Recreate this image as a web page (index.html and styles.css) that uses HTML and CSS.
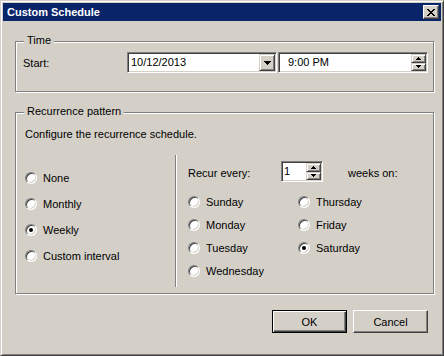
FILE: index.html
```html
<!DOCTYPE html>
<html lang="en">
<head>
    <meta charset="UTF-8">
    <title>Custom Schedule</title>
    <link rel="stylesheet" href="styles.css">
</head>
<body>
    <div class="window">
        <div class="titlebar">
            <span class="title">Custom Schedule</span>
            <span class="close">
                <svg width="8" height="7" viewBox="0 0 8 7"><path d="M0 0h2v1H0z M6 0h2v1H6z M1 1h2v1H1z M5 1h2v1H5z M2 2h4v1H2z M3 3h2v1H3z M2 4h4v1H2z M1 5h2v1H1z M5 5h2v1H5z M0 6h2v1H0z M6 6h2v1H6z" fill="#000"/></svg>
            </span>
        </div>

        <div class="client">
            <!-- time group -->
            <div class="group group-time">
                <div class="group-title">Time</div>
                <div class="time-row">
                    <span class="start-label">Start:</span>
                    <div class="field combo">
                        <span class="value">10/12/2013</span>
                        <span class="bevel drop-btn">
                            <svg width="7" height="4" viewBox="0 0 7 4"><path d="M0 0h7v1H0z M1 1h5v1H1z M2 2h3v1H2z M3 3h1v1H3z" fill="#000"/></svg>
                        </span>
                    </div>
                    <div class="field spin spin-time">
                        <span class="value">9:00 PM</span>
                        <span class="spin-btns">
                            <span class="bevel spin-btn"><svg width="5" height="3" viewBox="0 0 5 3"><path d="M2 0h1v1H2z M1 1h3v1H1z M0 2h5v1H0z" fill="#000"/></svg></span>
                            <span class="bevel spin-btn"><svg width="5" height="3" viewBox="0 0 5 3"><path d="M0 0h5v1H0z M1 1h3v1H1z M2 2h1v1H2z" fill="#000"/></svg></span>
                        </span>
                    </div>
                </div>
            </div>

            <!-- recurrence group -->
            <div class="group group-recur">
                <div class="group-title">Recurrence pattern</div>
                <div class="hint">Configure the recurrence schedule.</div>
                <div class="columns">
                    <div class="col-left">
                        <div class="option"><span class="radio"></span>None</div>
                        <div class="option"><span class="radio"></span>Monthly</div>
                        <div class="option"><span class="radio checked"></span>Weekly</div>
                        <div class="option"><span class="radio"></span>Custom interval</div>
                    </div>
                    <div class="col-right">
                        <div class="every-row">
                            <span class="every-label">Recur every:</span>
                            <div class="field spin spin-weeks">
                                <span class="value">1</span>
                                <span class="spin-btns">
                                    <span class="bevel spin-btn"><svg width="5" height="3" viewBox="0 0 5 3"><path d="M2 0h1v1H2z M1 1h3v1H1z M0 2h5v1H0z" fill="#000"/></svg></span>
                                    <span class="bevel spin-btn"><svg width="5" height="3" viewBox="0 0 5 3"><path d="M0 0h5v1H0z M1 1h3v1H1z M2 2h1v1H2z" fill="#000"/></svg></span>
                                </span>
                            </div>
                            <span class="weeks-label">weeks on:</span>
                        </div>
                        <div class="days">
                            <div class="option"><span class="radio"></span>Sunday</div>
                            <div class="option"><span class="radio"></span>Thursday</div>
                            <div class="option"><span class="radio"></span>Monday</div>
                            <div class="option"><span class="radio"></span>Friday</div>
                            <div class="option"><span class="radio"></span>Tuesday</div>
                            <div class="option"><span class="radio checked"></span>Saturday</div>
                            <div class="option"><span class="radio"></span>Wednesday</div>
                        </div>
                    </div>
                </div>
            </div>

            <div class="buttons">
                <button class="btn btn-default">OK</button>
                <button class="btn">Cancel</button>
            </div>
        </div>
    </div>
</body>
</html>
```

FILE: styles.css
```css
* {
    box-sizing: border-box;
}

body {
    margin: 0;
    background-color: #d4d0c8;
    font-family: "Liberation Sans", Arial, sans-serif;
    font-size: 11px;
    color: #000;
}

.window {
    width: 444px;
    height: 356px;
    background-color: #d4d0c8;
    border: 1px solid;
    border-color: #d4d0c8 #404040 #404040 #d4d0c8;
    box-shadow: inset 1px 1px 0 #fff, inset -1px -1px 0 #808080;
    padding: 2px;
    display: flex;
    flex-direction: column;
}

/* title bar */
.titlebar {
    height: 18px;
    background-color: #0a246a;
    display: flex;
    align-items: center;
    justify-content: space-between;
    padding: 0 2px;
}

.title {
    color: #fff;
    font-weight: bold;
    font-size: 11px;
    padding-left: 2px;
}

.close {
    width: 16px;
    height: 14px;
    background-color: #d4d0c8;
    border: 1px solid;
    border-color: #fff #404040 #404040 #fff;
    box-shadow: inset -1px -1px 0 #808080;
    display: flex;
    align-items: center;
    justify-content: center;
}

.client {
    flex: 1;
    padding: 20px 7px 0 12px;
}

/* etched group boxes */
.group {
    border: 1px solid #808080;
    box-shadow: inset 1px 1px 0 #fff, 1px 1px 0 #fff;
    padding: 0 5px 0 7px;
}

.group-title {
    width: fit-content;
    margin-top: -8px;
    margin-left: 1px;
    padding: 0 3px;
    line-height: 13px;
    background-color: #d4d0c8;
}

.group-time {
    padding-bottom: 18px;
}

.time-row {
    display: flex;
    align-items: center;
    height: 21px;
    margin-top: 5px;
}

.start-label {
    width: 104px;
}

/* sunken fields */
.field {
    height: 21px;
    background-color: #fff;
    border: 1px solid;
    border-color: #808080 #fff #fff #808080;
    box-shadow: inset 1px 1px 0 #404040, inset -1px -1px 0 #d4d0c8;
    padding: 1px;
    display: flex;
    align-items: center;
}

.field .value {
    flex: 1;
    line-height: 17px;
}

.combo {
    width: 150px;
}

.combo .value {
    padding-left: 2px;
}

.spin-time {
    width: 150px;
    margin-left: 1px;
}

.spin-time .value {
    padding-left: 8px;
}

.bevel {
    background-color: #d4d0c8;
    border: 1px solid;
    border-color: #d4d0c8 #404040 #404040 #d4d0c8;
    box-shadow: inset 1px 1px 0 #fff, inset -1px -1px 0 #808080;
    display: flex;
    align-items: center;
    justify-content: center;
}

.drop-btn {
    width: 16px;
    height: 17px;
}

.spin-btns {
    display: flex;
    flex-direction: column;
    width: 15px;
    height: 17px;
}

.spin-btn {
    flex: 1;
}

.group-recur {
    margin-top: 20px;
    padding-bottom: 6px;
}

.hint {
    margin-top: 10px;
    margin-left: 2px;
    line-height: 13px;
}

.columns {
    display: flex;
    height: 132px;
    margin-top: 14px;
}

.col-left {
    width: 153px;
    border-right: 1px solid #808080;
    padding: 10px 0 0 2px;
}

.col-right {
    flex: 1;
    border-left: 1px solid #fff;
    padding-left: 11px;
}

.option {
    display: flex;
    align-items: center;
    gap: 6px;
    height: 26px;
}

.radio {
    width: 12px;
    height: 12px;
    border-radius: 50%;
    background-color: #fff;
    border: 1px solid;
    border-color: #808080 #fff #fff #808080;
    box-shadow: inset 1px 1px 0 #404040, inset -1px -1px 0 #d4d0c8;
    display: flex;
    align-items: center;
    justify-content: center;
}

.radio.checked::after {
    content: "";
    width: 4px;
    height: 4px;
    border-radius: 50%;
    background-color: #000;
}

.every-row {
    display: flex;
    align-items: center;
    height: 21px;
    margin-top: 6px;
}

.every-label {
    width: 93px;
    padding-top: 3px;
}

.spin-weeks {
    width: 42px;
}

.spin-weeks .value {
    padding-left: 1px;
}

.weeks-label {
    margin-left: 25px;
    padding-top: 3px;
}

.days {
    display: grid;
    grid-template-columns: 110px 110px;
    grid-auto-rows: 23px;
    margin-top: 8px;
}

.days .option {
    height: 23px;
}

.buttons {
    display: flex;
    justify-content: flex-end;
    gap: 6px;
    margin: 16px 6px 0 0;
}

.btn {
    width: 75px;
    height: 23px;
    font-family: "Liberation Sans", Arial, sans-serif;
    font-size: 11px;
    color: #000;
    background-color: #d4d0c8;
    border: 1px solid;
    border-color: #fff #404040 #404040 #fff;
    box-shadow: inset -1px -1px 0 #808080;
    padding: 0;
}

.btn-default {
    border-color: #000;
    box-shadow: inset 1px 1px 0 #fff, inset -1px -1px 0 #404040, inset -2px -2px 0 #808080;
}
```
